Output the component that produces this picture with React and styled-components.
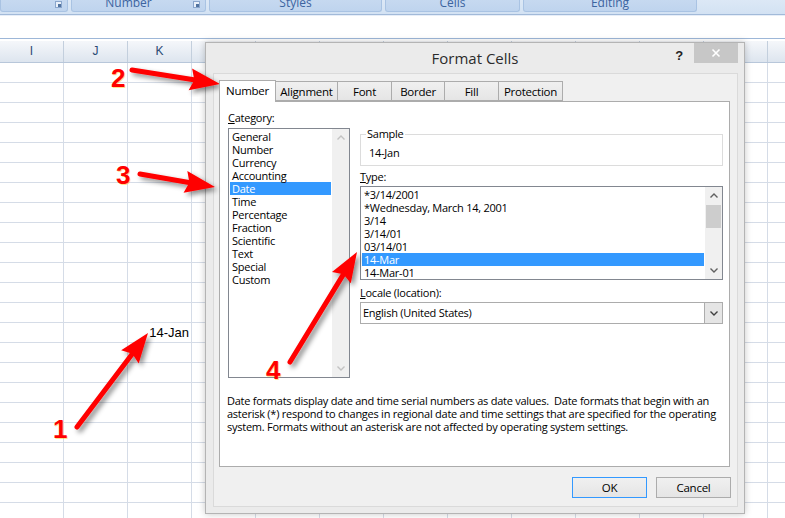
import React from 'react'
import styled, { createGlobalStyle } from 'styled-components'

const UI_FONT = `"Segoe UI", "Open Sans", "Noto Sans", sans-serif`

const CATEGORIES = ['General', 'Number', 'Currency', 'Accounting', 'Date', 'Time', 'Percentage', 'Fraction', 'Scientific', 'Text', 'Special', 'Custom']
const TYPES = ['*3/14/2001', '*Wednesday, March 14, 2001', '3/14', '3/14/01', '03/14/01', '14-Mar', '14-Mar-01']
const TABS = [
  { label: 'Number', w: 57, active: true },
  { label: 'Alignment', w: 63 },
  { label: 'Font', w: 55 },
  { label: 'Border', w: 54 },
  { label: 'Fill', w: 55 },
  { label: 'Protection', w: 65 },
]
const COLUMNS = ['I', 'J', 'K', 'L', 'M', 'N', 'O', 'P', 'Q', 'R', 'S', 'T', 'U']
const ROW_COUNT = 23
const RIBBON_GROUPS = [
  { label: '', w: 68, launcher: true },
  { label: 'Number', w: 135, launcher: true },
  { label: 'Styles', w: 173 },
  { label: 'Cells', w: 135 },
  { label: 'Editing', w: 174 },
]

// tail -> tip, in page coordinates
const ARROWS = [
  { from: [132, 70], to: [220, 84] },
  { from: [140, 174], to: [215, 187] },
  { from: [77, 427], to: [148, 333] },
  { from: [290, 362], to: [357, 252] },
]
const MARKS = [
  { n: '1', x: 53, y: 416 },
  { n: '2', x: 111, y: 65 },
  { n: '3', x: 116, y: 162 },
  { n: '4', x: 266, y: 357 },
]

const GlobalStyle = createGlobalStyle`
  html, body { margin: 0; padding: 0; background: #fff; overflow: hidden; }
`

const Page = styled.div`
  position: relative;
  width: 785px;
  height: 518px;
  overflow: hidden;
  background: #fff;
  font-family: ${UI_FONT};
`

/* ---------- ribbon + formula bar ---------- */

const Ribbon = styled.div`
  height: 15px;
  display: flex;
  align-items: flex-start;
  gap: 3px;
  background: linear-gradient(#dce8f6, #d3e2f3);
  border-bottom: 1px solid #a2bad9;
  box-sizing: border-box;
  overflow: hidden;
`

const RibbonGroup = styled.div`
  position: relative;
  flex: none;
  width: ${p => p.$w}px;
  height: 12px;
  box-sizing: border-box;
  padding-right: ${p => (p.$launcher ? 20 : 0)}px;
  background: linear-gradient(#c6d9f0, #bfd4ee);
  border: 1px solid #a9c3e3;
  border-top: none;
  border-radius: 0 0 3px 3px;
  color: #3c64a0;
  font-size: 12px;
  line-height: 12px;
  text-align: center;
  overflow: hidden;
`

const GroupLabel = styled.div`
  margin-top: -3px;
`

const Launcher = styled.span`
  position: absolute;
  right: 5px;
  top: 1px;
  width: 7px;
  height: 7px;
  border: 1px solid #8aa6cc;
  background: #e9f0f9;
  box-sizing: border-box;
  &::after {
    content: '';
    position: absolute;
    right: 0;
    bottom: 0;
    width: 3px;
    height: 3px;
    background: #51739f;
  }
`

const RibbonFoot = styled.div`
  height: 1px;
  background: #e7eef8;
`

const FormulaBar = styled.div`
  height: 22px;
  background: #fff;
  border-bottom: 1px solid #9db7d8;
`

const HeaderGap = styled.div`
  height: 2px;
  background: #fff;
`

/* ---------- sheet ---------- */

const HeaderRow = styled.div`
  display: flex;
  height: 22px;
  box-sizing: border-box;
  border-bottom: 1px solid #b8c7da;
  background: linear-gradient(#f5f7fa, #dde5ef);
`

const HeaderCell = styled.div`
  flex: none;
  width: 64px;
  box-sizing: border-box;
  border-right: 1px solid #c3cfdd;
  text-align: center;
  font-family: "Liberation Sans", Arial, sans-serif;
  font-size: 12px;
  line-height: 21px;
  color: #2a4a73;
`

const Row = styled.div`
  display: flex;
  height: 20px;
  box-sizing: border-box;
  border-bottom: 1px solid #d5dce7;
`

const Cell = styled.div`
  flex: none;
  width: 64px;
  box-sizing: border-box;
  border-right: 1px solid #d5dce7;
  padding-right: 2px;
  text-align: right;
  font-family: "Liberation Sans", Arial, sans-serif;
  font-size: 13px;
  line-height: 20px;
  color: #000;
`

/* ---------- dialog ---------- */

const Dialog = styled.div`
  position: absolute;
  left: 205px;
  top: 42px;
  width: 540px;
  height: 472px;
  box-sizing: border-box;
  display: flex;
  flex-direction: column;
  background: #ebebeb;
  border: 1px solid #b4b4b4;
  box-shadow: 0 0 7px rgba(0, 0, 0, 0.22);
  font-size: 11px;
  letter-spacing: -0.25px;
`

const TitleBar = styled.div`
  flex: none;
  height: 30px;
  display: grid;
  grid-template-columns: 74px 1fr 74px;
`

const Title = styled.div`
  grid-column: 2;
  text-align: center;
  font-size: 15px;
  letter-spacing: 0;
  line-height: 30px;
  color: #2b2b2b;
`

const TitleControls = styled.div`
  display: flex;
  justify-content: flex-end;
  align-items: flex-start;
`

const HelpMark = styled.span`
  margin: 5px 11px 0 0;
  font-family: "Liberation Sans", Arial, sans-serif;
  font-weight: bold;
  font-size: 13px;
  line-height: 16px;
  color: #222;
`

const CloseButton = styled.div`
  width: 44px;
  height: 20px;
  margin-right: 6px;
  background: #c7c7c7;
  display: flex;
  align-items: center;
  justify-content: center;
`

const Frame = styled.div`
  flex: 1;
  margin: 0 6px 6px 7px;
  border: 1px solid #dadada;
  background: #f0f0f0;
  padding: 6px 7px 0 5px;
  display: flex;
  flex-direction: column;
`

const TabStrip = styled.div`
  display: flex;
  align-items: flex-end;
  height: 21px;
  position: relative;
  z-index: 1;
`

const Tab = styled.div`
  flex: none;
  width: ${p => p.$w}px;
  height: ${p => (p.$active ? 22 : 20)}px;
  box-sizing: border-box;
  margin-left: -1px;
  margin-bottom: ${p => (p.$active ? -1 : 0)}px;
  border: 1px solid #acacac;
  border-bottom: ${p => (p.$active ? 'none' : '1px solid #acacac')};
  background: ${p => (p.$active ? '#fff' : 'linear-gradient(#f0f0f0, #e5e5e5)')};
  text-align: center;
  font-size: 11.5px;
  line-height: ${p => (p.$active ? 20 : 19)}px;
  color: #000;
  &:first-child { margin-left: 0; }
`

const Panel = styled.div`
  height: 366px;
  box-sizing: border-box;
  background: #fff;
  border: 1px solid #acacac;
  padding: 9px 8px 0 8px;
  color: #000;
`

const Columns = styled.div`
  display: flex;
  gap: 10px;
`

const LeftCol = styled.div`
  width: 122px;
  flex: none;
`

const RightCol = styled.div`
  width: 363px;
  flex: none;
`

const FieldLabel = styled.div`
  height: 14px;
  line-height: 14px;
  margin-top: ${p => p.$mt || 0}px;
  & u { text-decoration: underline; text-underline-offset: 1px; }
`

const ListBox = styled.div`
  margin-top: ${p => p.$mt || 0}px;
  height: ${p => p.$h}px;
  box-sizing: border-box;
  border: 1px solid #828790;
  display: flex;
`

const ListItems = styled.div`
  flex: 1;
  padding: 1px;
  overflow: hidden;
`

const ListItem = styled.div`
  height: 13px;
  line-height: 13px;
  padding-left: 2px;
  white-space: nowrap;
  background: ${p => (p.$selected ? '#3399ff' : 'transparent')};
  color: ${p => (p.$selected ? '#fff' : '#000')};
`

const ScrollBar = styled.div`
  width: 17px;
  flex: none;
  background: #f0f0f0;
  display: flex;
  flex-direction: column;
`

const ScrollArrow = styled.div`
  height: 17px;
  display: flex;
  align-items: center;
  justify-content: center;
`

const ScrollTrack = styled.div`
  flex: 1;
  padding-top: 1px;
`

const ScrollThumb = styled.div`
  margin: 0 1px;
  height: 23px;
  background: #cdcdcd;
`

const SampleGroup = styled.fieldset`
  margin: 16px 0 0 0;
  padding: 0 0 5px 5px;
  border: 1px solid #dcdcdc;
  min-width: 0;
  & legend {
    padding: 0 1px;
    line-height: 14px;
  }
`

const SampleValue = styled.div`
  padding-left: 3px;
  margin-top: 5px;
  height: 14px;
  line-height: 14px;
`

const Select = styled.div`
  margin-top: 2px;
  height: 22px;
  box-sizing: border-box;
  border: 1px solid #acacac;
  display: flex;
`

const SelectValue = styled.div`
  flex: 1;
  padding-left: 2px;
  line-height: 20px;
`

const SelectButton = styled.div`
  width: 17px;
  border-left: 1px solid #acacac;
  background: #e5e5e5;
  display: flex;
  align-items: center;
  justify-content: center;
`

const Description = styled.div`
  margin: 16px 0 0 -1px;
  line-height: 13px;
  & span { display: block; white-space: nowrap; }
`

const Footer = styled.div`
  display: flex;
  justify-content: flex-end;
  gap: 9px;
  padding-top: 10px;
  margin-right: -1px;
`

const Button = styled.div`
  width: 75px;
  height: 21px;
  box-sizing: border-box;
  border: 1px solid ${p => (p.$default ? '#3399ff' : '#acacac')};
  background: linear-gradient(#f0f0f0, #e5e5e5);
  text-align: center;
  font-size: 11.5px;
  line-height: 19px;
  color: #000;
`

/* ---------- annotation overlay ---------- */

const Overlay = styled.svg`
  position: absolute;
  left: 0;
  top: 0;
  pointer-events: none;
`

const Mark = styled.span`
  position: absolute;
  left: ${p => p.$x}px;
  top: ${p => p.$y}px;
  font-family: "Liberation Sans", Arial, sans-serif;
  font-weight: bold;
  font-size: 26px;
  line-height: 26px;
  color: #ff0000;
  text-shadow: 1px 1px 0 rgba(255, 190, 0, 0.45);
`

const Chevron = ({ up, color = '#606060' }) => (
  <svg width="8" height="5" viewBox="0 0 8 5">
    <polyline
      points={up ? '0.5,4.5 4,1 7.5,4.5' : '0.5,0.5 4,4 7.5,0.5'}
      fill="none"
      stroke={color}
      strokeWidth="1.4"
    />
  </svg>
)

const VScroll = ({ disabled, thumb }) => {
  const c = disabled ? '#c2c2c2' : '#606060'
  return <ScrollBar>
    <ScrollArrow><Chevron up color={c} /></ScrollArrow>
    <ScrollTrack>{thumb && <ScrollThumb />}</ScrollTrack>
    <ScrollArrow><Chevron color={c} /></ScrollArrow>
  </ScrollBar>
}

const Arrow = ({ from, to }) => {
  const [x1, y1] = from
  const [x2, y2] = to
  const len = Math.hypot(x2 - x1, y2 - y1)
  const ux = (x2 - x1) / len
  const uy = (y2 - y1) / len
  const head = 30
  const half = 11
  const bx = x2 - ux * head
  const by = y2 - uy * head
  const pts = [
    [x2, y2],
    [bx - uy * half, by + ux * half],
    [bx + ux * 4, by + uy * 4],
    [bx + uy * half, by - ux * half],
  ].map(p => p.join(',')).join(' ')
  return <g filter="url(#shadow)">
    <line x1={x1} y1={y1} x2={bx + ux * 5} y2={by + uy * 5} stroke="#ff0000" strokeWidth="5" strokeLinecap="round" />
    <polygon points={pts} fill="#ff0000" />
  </g>
}

const FormatCellsDialog = () => {
  return <Dialog>
    <TitleBar>
      <Title>Format Cells</Title>
      <TitleControls>
        <HelpMark>?</HelpMark>
        <CloseButton>
          <svg width="10" height="10" viewBox="0 0 10 10">
            <path d="M1.5 1.5 L8.5 8.5 M8.5 1.5 L1.5 8.5" stroke="#fff" strokeWidth="1.6" />
          </svg>
        </CloseButton>
      </TitleControls>
    </TitleBar>
    <Frame>
      <TabStrip>
        {TABS.map(t => <Tab key={t.label} $w={t.w} $active={t.active}>{t.label}</Tab>)}
      </TabStrip>
      <Panel>
        <Columns>
          <LeftCol>
            <FieldLabel><u>C</u>ategory:</FieldLabel>
            <ListBox $mt={3} $h={250}>
              <ListItems>
                {CATEGORIES.map(c => <ListItem key={c} $selected={c === 'Date'}>{c}</ListItem>)}
              </ListItems>
              <VScroll disabled />
            </ListBox>
          </LeftCol>
          <RightCol>
            <SampleGroup>
              <legend>Sample</legend>
              <SampleValue>14-Jan</SampleValue>
            </SampleGroup>
            <FieldLabel $mt={4}><u>T</u>ype:</FieldLabel>
            <ListBox $mt={2} $h={94}>
              <ListItems>
                {TYPES.map(t => <ListItem key={t} $selected={t === '14-Mar'}>{t}</ListItem>)}
              </ListItems>
              <VScroll thumb />
            </ListBox>
            <FieldLabel $mt={6}><u>L</u>ocale (location):</FieldLabel>
            <Select>
              <SelectValue>English (United States)</SelectValue>
              <SelectButton><Chevron color="#404040" /></SelectButton>
            </Select>
          </RightCol>
        </Columns>
        <Description>
          <span>Date formats display date and time serial numbers as date values.&nbsp; Date formats that begin with an</span>
          <span>asterisk (*) respond to changes in regional date and time settings that are specified for the operating</span>
          <span>system. Formats without an asterisk are not affected by operating system settings.</span>
        </Description>
      </Panel>
      <Footer>
        <Button $default>OK</Button>
        <Button>Cancel</Button>
      </Footer>
    </Frame>
  </Dialog>
}

export default function App() {
  return <Page>
    <GlobalStyle />
    <Ribbon>
      {RIBBON_GROUPS.map((g, i) => <RibbonGroup key={i} $w={g.w} $launcher={g.launcher}>
        <GroupLabel>{g.label}</GroupLabel>
        {g.launcher && <Launcher />}
      </RibbonGroup>)}
    </Ribbon>
    <RibbonFoot />
    <FormulaBar />
    <HeaderGap />
    <HeaderRow>
      {COLUMNS.map(c => <HeaderCell key={c}>{c}</HeaderCell>)}
    </HeaderRow>
    {Array.from({ length: ROW_COUNT }, (_, r) => <Row key={r}>
      {COLUMNS.map(c => <Cell key={c}>{r === 13 && c === 'K' ? '14-Jan' : ''}</Cell>)}
    </Row>)}
    <FormatCellsDialog />
    <Overlay width="785" height="518">
      <defs>
        <filter id="shadow" x="-30%" y="-30%" width="160%" height="160%">
          <feDropShadow dx="3" dy="3" stdDeviation="2.5" floodColor="#000" floodOpacity="0.45" />
        </filter>
      </defs>
      {ARROWS.map((a, i) => <Arrow key={i} {...a} />)}
    </Overlay>
    {MARKS.map(m => <Mark key={m.n} $x={m.x} $y={m.y}>{m.n}</Mark>)}
  </Page>
}
